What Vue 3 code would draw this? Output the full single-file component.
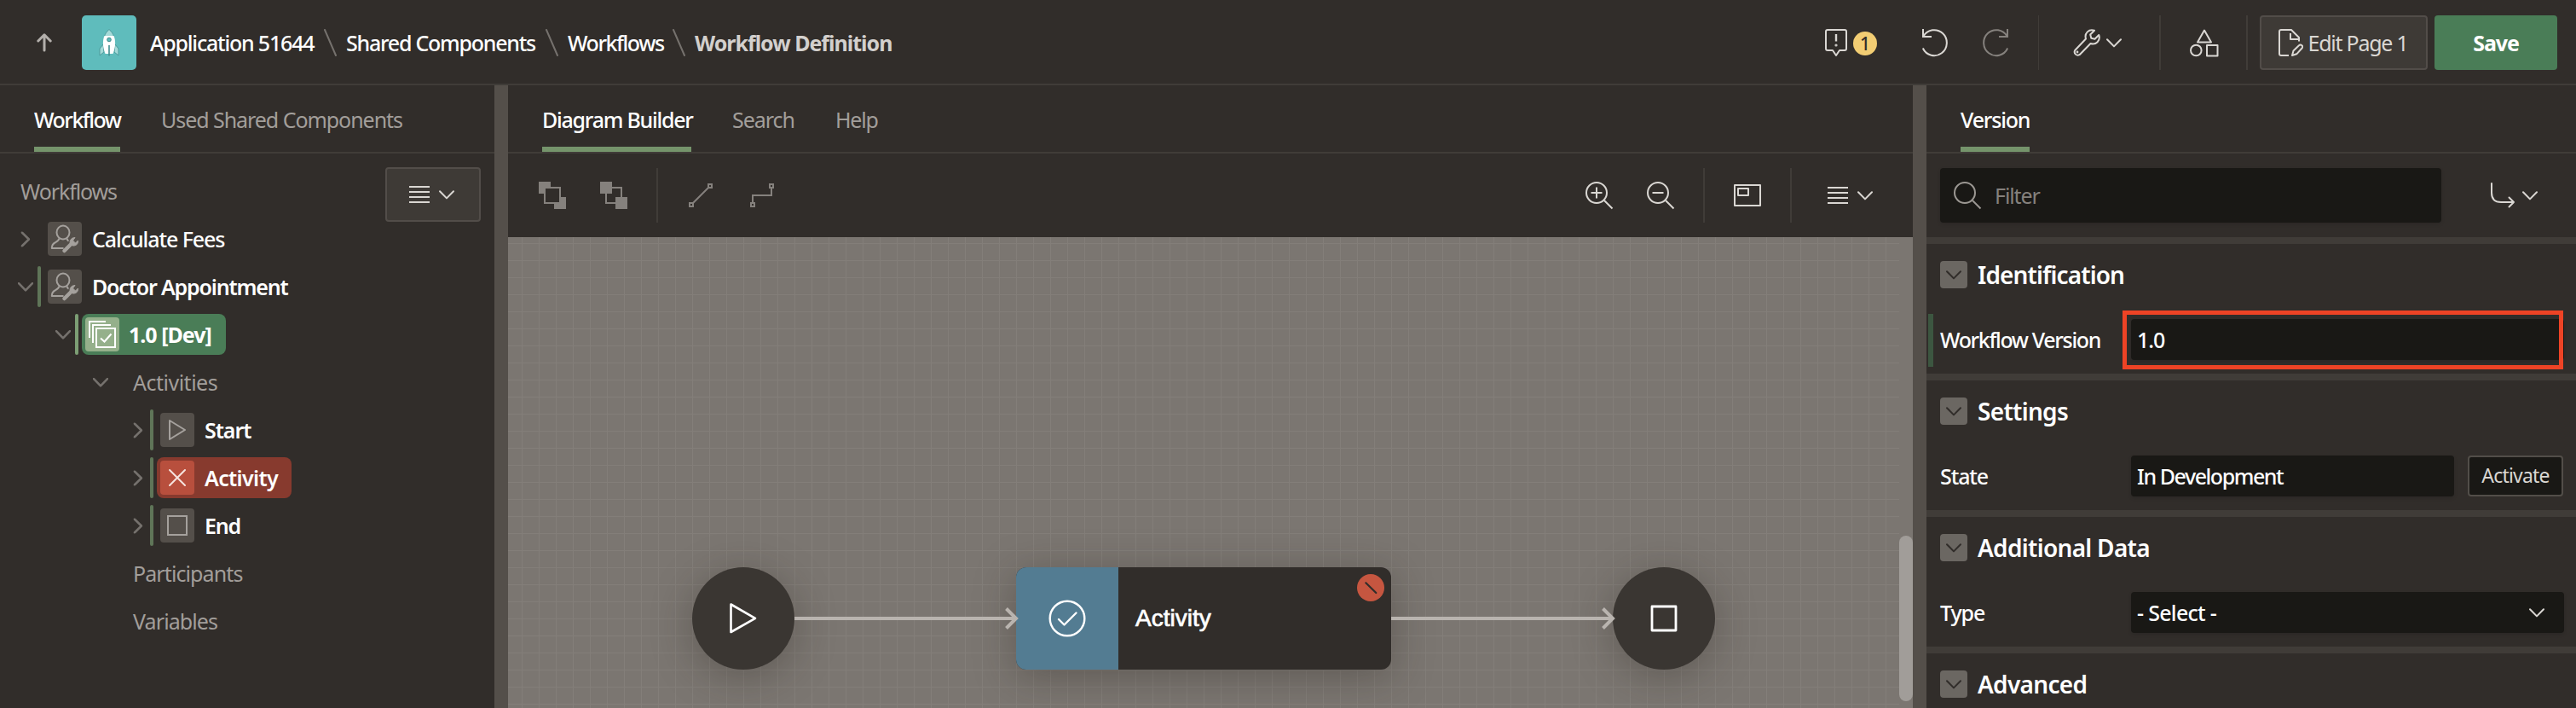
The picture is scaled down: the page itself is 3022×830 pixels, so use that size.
<script setup>
import { h } from 'vue'

const Chevron = (props) =>
  h('svg', { class: 'chev', width: 18, height: 11, viewBox: '0 0 18 11', fill: 'none', stroke: 'currentColor', 'stroke-width': props.w || 2, 'stroke-linecap': 'round', 'stroke-linejoin': 'round' }, [
    h('path', { d: 'M1 1.2L9 9.4L17 1.2' })
  ])
Chevron.props = ['w']

const MenuLines = () =>
  h('svg', { width: 24, height: 20, viewBox: '0 0 24 20', fill: 'none', stroke: 'currentColor', 'stroke-width': 2 }, [
    h('path', { d: 'M0 1H24M0 7H24M0 13H24M0 19H24' })
  ])

const crumbs = [
  { text: 'Application 51644', ls: -1.2, w: 194 },
  { text: 'Shared Components', ls: -1.25, w: 224 },
  { text: 'Workflows', ls: -1.45, w: 113 }
]

const tree = [
  { text: 'Calculate Fees', level: 0, toggle: 'closed', icon: 'flow', ls: -1.07, cls: 'medium' },
  { text: 'Doctor Appointment', level: 0, toggle: 'open', icon: 'flow', bar: true, ls: -1.18, cls: 'semi' },
  { text: '1.0 [Dev]', level: 1, toggle: 'open', icon: 'version', bar: true, ls: -1, cls: 'selected' },
  { text: 'Activities', level: 2, toggle: 'open', ls: -0.5, cls: 'plain' },
  { text: 'Start', level: 3, toggle: 'closed', icon: 'play', bar: true, ls: -1.05, cls: 'semi' },
  { text: 'Activity', level: 3, toggle: 'closed', icon: 'cross', bar: true, ls: -0.65, cls: 'error' },
  { text: 'End', level: 3, toggle: 'closed', icon: 'stop', bar: true, ls: -1.2, cls: 'semi' },
  { text: 'Participants', level: 2, ls: -0.9, cls: 'plain' },
  { text: 'Variables', level: 2, ls: -0.9, cls: 'plain' }
]
</script>

<template>
  <div class="app">
    <header class="top">
      <svg class="up" width="18" height="22" viewBox="0 0 18 22"><path d="M9 20V2M1.8 9L9 1.8L16.2 9" fill="none" stroke="#b3afab" stroke-width="3" stroke-linecap="round" stroke-linejoin="round" /></svg>
      <div class="logo">
        <svg width="24" height="32" viewBox="0 0 24 32">
          <path d="M5 18L1 23V31L6 27ZM19 18L23 23V31L18 27Z" fill="#a4dad8" stroke="#4a9a9b" stroke-width="1" />
          <path d="M12 0.5C9 3 7.500 5.500 6.500 8.500H17.500C16.500 5.500 15 3 12 0.500Z" fill="#a4dad8" stroke="#4a9a9b" stroke-width="1" />
          <path d="M6.500 8H17.500C20 14 19.500 22 16.500 29H7.500C4.500 22 4 14 6.500 8Z" fill="#fff" />
          <circle cx="12" cy="12.500" r="2.300" fill="#5fbcbc" stroke="#3f8a8b" />
          <path d="M12 19V31.500" stroke="#3f8f90" stroke-width="1.600" />
        </svg>
      </div>
      <nav class="crumbs">
        <template v-for="c in crumbs" :key="c.text">
          <span class="crumb" :style="{ letterSpacing: c.ls + 'px', width: c.w + 'px' }">{{ c.text }}</span>
          <svg class="slash" width="15" height="32" viewBox="0 0 15 32"><path d="M1 1L14 31" stroke="#75716d" stroke-width="2" stroke-linecap="round" /></svg>
        </template>
        <span class="crumb current">Workflow Definition</span>
      </nav>
      <div class="actions">
        <svg class="comment" width="26" height="32" viewBox="0 0 26 32" fill="none" stroke="#dad7d3" stroke-width="2" stroke-linejoin="round"><path d="M3 1H23A2 2 0 0 1 25 3V23A2 2 0 0 1 23 25H17L13 31L9 25H3A2 2 0 0 1 1 23V3A2 2 0 0 1 3 1Z" /><path d="M13 6V14.500" stroke-width="2.400" /><circle cx="13" cy="19" r="0.600" /></svg>
        <span class="badge">1</span>
        <svg class="undo" width="32" height="33" viewBox="0 0 32 33" fill="none" stroke="#dad7d3" stroke-width="2"><path d="M2 0V9H12M2.500 8.500A14.700 15 0 1 1 1.800 22.500" /></svg>
        <svg class="redo" width="32" height="33" viewBox="0 0 32 33" fill="none" stroke="#85817d" stroke-width="2"><path d="M30 0V9H20M29.500 8.500A14.700 15 0 1 0 30.200 22.500" /></svg>
        <i class="sep s1"></i>
        <svg class="wrench" width="32" height="32" viewBox="0 0 32 32" fill="none" stroke="#dad7d3" stroke-width="2" stroke-linejoin="round"><path d="M25 1.700C18.500 -0.500 13 5 15 11.500L2.200 25A3.900 3.900 0 0 0 7.600 30.200L20.500 17C27 19 32.500 13.500 30.300 7L25.500 11.800L21.300 10.800L20.200 6.500Z" /><circle cx="5" cy="27" r="0.800" stroke-width="1.200" /></svg>
        <Chevron class="light c-wrench" />
        <i class="sep s2"></i>
        <svg class="shapes" width="34" height="33" viewBox="0 0 34 33" fill="none" stroke="#dad7d3" stroke-width="2" stroke-linejoin="round"><path d="M17 1.500L25 15.500H9Z" /><circle cx="7.300" cy="25" r="6.300" /><path d="M20 19H32.500V31.500H20Z" /></svg>
        <i class="sep s3"></i>
        <div class="btn edit">
          <svg width="29" height="32" viewBox="0 0 29 32" fill="none" stroke="#dad7d3" stroke-width="2" stroke-linejoin="round"><path d="M12 31H3A2 2 0 0 1 1 29V3A2 2 0 0 1 3 1H15L24 10V14.500M14 5V12H23" /><path d="M16 31L17.500 25.500L24 19.300A2.300 2.300 0 0 1 27.500 22.500L21.300 29.300Z" /></svg>
          <span>Edit Page 1</span>
        </div>
        <div class="btn save"><span>Save</span></div>
      </div>
    </header>

    <main class="body">
      <section class="left">
        <div class="tabs">
          <span class="tab on t-wf">Workflow</span>
          <span class="tab t-shared">Used Shared Components</span>
        </div>
        <div class="tree-head">
          <span class="tree-title">Workflows</span>
          <div class="menu-btn"><MenuLines /><Chevron /></div>
        </div>
        <ul class="tree">
          <li v-for="n in tree" :key="n.text" :class="['node', n.cls, 'lv' + n.level]">
            <span class="toggle"><Chevron v-if="n.toggle" :class="n.toggle" :w="2.600" /></span>
            <i :class="['bar', { shown: n.bar }]"></i>
            <span class="pill">
              <span v-if="n.icon" class="ico">
                <svg v-if="n.icon === 'flow'" width="40" height="40" viewBox="0 0 40 40" fill="none" stroke="#a5a19d" stroke-width="2" stroke-linejoin="round"><ellipse cx="18" cy="12.500" rx="7.500" ry="8" /><path d="M13.500 19.500C13 22 11 23 8.500 24.500C5.500 26 4.800 28 4.800 31H18.500M22.500 19.500C22.800 21 23.300 22 24.500 22.600" /><path d="M19.500 34L28 25.500" stroke-width="4.500" stroke-linecap="round" /><path d="M32 18.500C28 18.500 25.500 21.500 26.200 25L29 28C33 28.500 36 26 35.500 22L32.500 25L29.500 22Z" fill="#a5a19d" stroke-width="1" /></svg>
                <svg v-else-if="n.icon === 'version'" width="40" height="40" viewBox="0 0 40 40" fill="none" stroke="#fff" stroke-width="2"><path d="M13 13H35V35H13ZM9 30V9H30M5 24V5H24" /><path d="M18 24.500L22.500 28.500L30.500 19.500" /></svg>
                <svg v-else-if="n.icon === 'play'" width="40" height="40" viewBox="0 0 40 40" fill="none" stroke="#a5a19d" stroke-width="2" stroke-linejoin="round"><path d="M11 9L29 20L11 31Z" /></svg>
                <svg v-else-if="n.icon === 'cross'" width="40" height="40" viewBox="0 0 40 40" fill="none" stroke="#f6e4df" stroke-width="2" stroke-linecap="round"><path d="M11 11L29 29M29 11L11 29" /></svg>
                <svg v-else width="40" height="40" viewBox="0 0 40 40" fill="none" stroke="#a5a19d" stroke-width="2"><path d="M9 9H31V31H9Z" /></svg>
              </span>
              <span class="label" :style="{ letterSpacing: n.ls + 'px' }">{{ n.text }}</span>
            </span>
          </li>
        </ul>
      </section>

      <div class="splitter"></div>

      <section class="center">
        <div class="tabs">
          <span class="tab on t-diag">Diagram Builder</span>
          <span class="tab t-search">Search</span>
          <span class="tab t-help">Help</span>
        </div>
        <div class="toolbar">
          <svg width="32" height="32" viewBox="0 0 32 32"><path d="M0 0H14V6H6V14H0ZM32 32H18V26H26V18H32Z" fill="#85817d" /><path d="M7 7H25V25H7Z" fill="none" stroke="#85817d" stroke-width="2" /></svg>
          <svg class="g40" width="32" height="32" viewBox="0 0 32 32"><path d="M7 7H25V25H7Z" fill="none" stroke="#85817d" stroke-width="2" /><path d="M0 0H14V14H0ZM18 18H32V32H18Z" fill="#85817d" /></svg>
          <i class="vr g34"></i>
          <svg class="g36" width="28" height="28" viewBox="0 0 28 28" fill="none" stroke="#85817d" stroke-width="2"><path d="M1 23H5V27H1ZM23 1H27V5H23ZM4.500 23.500L23.500 4.500" /></svg>
          <svg class="g44" width="28" height="28" viewBox="0 0 28 28" fill="none" stroke="#85817d" stroke-width="2"><path d="M1 23H5V27H1ZM23 1H27V5H23ZM3 23V14H25V5" /></svg>
          <div class="tool-right">
            <svg width="33" height="33" viewBox="0 0 33 33" fill="none" stroke="#dad7d3" stroke-width="2"><circle cx="13" cy="13" r="12" /><path d="M22 22L31.500 31.500M6.500 13H19.500M13 6.500V19.500" /></svg>
            <svg class="g39" width="33" height="33" viewBox="0 0 33 33" fill="none" stroke="#dad7d3" stroke-width="2"><circle cx="13" cy="13" r="12" /><path d="M22 22L31.500 31.500M6.500 13H19.500" /></svg>
            <i class="vr g33"></i>
            <svg class="g34" width="32" height="26" viewBox="0 0 32 26" fill="none" stroke="#dad7d3" stroke-width="2" stroke-linejoin="round"><path d="M1 1H31V25H1ZM5 5H17V13H5Z" /></svg>
            <i class="vr g34"></i>
            <MenuLines class="g42 light" />
            <Chevron class="g11 light" />
          </div>
        </div>
        <div class="canvas">
          <div class="grid"></div>
          <div class="nd circle start">
            <svg width="34" height="38" viewBox="0 0 34 38"><path d="M2.500 2.500L31 18.800L2.500 35Z" fill="none" stroke="#fff" stroke-width="2.600" stroke-linejoin="round" /></svg>
          </div>
          <div class="nd act">
            <div class="act-ico"><svg width="44" height="44" viewBox="0 0 44 44" fill="none" stroke="#fff" stroke-width="2.400" stroke-linecap="round" stroke-linejoin="round"><circle cx="22" cy="22" r="20.300" /><path d="M12 23L18.500 29.500L32.500 15.500" /></svg></div>
            <div class="act-name">Activity</div>
            <svg class="act-err" width="32" height="32" viewBox="0 0 32 32"><circle cx="16" cy="16" r="16" fill="#c65640" /><path d="M10.300 10.300L22.300 22" stroke="#312d2a" stroke-width="2.200" stroke-linecap="round" /></svg>
          </div>
          <div class="nd circle end">
            <svg width="32" height="32" viewBox="0 0 32 32"><path d="M2 2H30V30H2Z" fill="none" stroke="#fff" stroke-width="2.800" stroke-linejoin="round" /></svg>
          </div>
          <svg class="link l1" width="264" height="30" viewBox="0 0 264 30" fill="none" stroke="#b9b4af" stroke-width="4"><path d="M0 15H260M248.500 3.500L260 15L248.500 26.500" /></svg>
          <svg class="link l2" width="264" height="30" viewBox="0 0 264 30" fill="none" stroke="#b9b4af" stroke-width="4"><path d="M0 15H260M248.500 3.500L260 15L248.500 26.500" /></svg>
          <div class="thumb"></div>
        </div>
      </section>

      <div class="splitter"></div>

      <section class="right">
        <div class="tabs"><span class="tab on t-ver">Version</span></div>
        <div class="filter-row">
          <div class="filter">
            <svg width="33" height="33" viewBox="0 0 33 33" fill="none" stroke="#9b9792" stroke-width="2"><circle cx="13" cy="13" r="12" /><path d="M22 22L31.500 31.500" /></svg>
            <span>Filter</span>
          </div>
          <svg class="goto" width="30" height="30" viewBox="0 0 30 30" fill="none" stroke="#dad7d3" stroke-width="2" stroke-linecap="round" stroke-linejoin="round"><path d="M2 1V12Q2 23 13 23H28M22.500 17.500L28 23L22.500 28.500" /></svg>
          <Chevron class="light" />
        </div>

        <div class="group">
          <div class="g-head"><span class="box"><Chevron /></span><h3 class="h-id">Identification</h3></div>
          <div class="field changed">
            <label class="l-wv">Workflow Version</label>
            <div class="input full">1.0</div>
            <div class="highlight"></div>
          </div>
        </div>
        <div class="group">
          <div class="g-head"><span class="box"><Chevron /></span><h3>Settings</h3></div>
          <div class="field">
            <label>State</label>
            <div class="input state">In Development</div>
            <div class="activate">Activate</div>
          </div>
        </div>
        <div class="group">
          <div class="g-head"><span class="box"><Chevron /></span><h3>Additional Data</h3></div>
          <div class="field">
            <label>Type</label>
            <div class="input full select">- Select -<Chevron class="light" /></div>
          </div>
        </div>
        <div class="group">
          <div class="g-head"><span class="box"><Chevron /></span><h3>Advanced</h3></div>
        </div>
      </section>
    </main>
  </div>
</template>

<style>
body { background: #312d2a; overflow: hidden; }
</style>

<style scoped>
.app { width: 3022px; height: 830px; overflow: hidden; background: #312d2a; color: #fff; font: 500 25px/34px "Noto Sans", "Open Sans", sans-serif; letter-spacing: -1.1px; display: flex; flex-direction: column; white-space: nowrap; }
.app * { box-sizing: border-box; }
svg { display: block; flex: none; }
.light { color: #dad7d3; }

.top { height: 100px; border-bottom: 2px solid #403c38; display: flex; align-items: center; padding: 0 22px 0 43px; flex: none; }
.up { margin-top: 2px; }
.logo { width: 64px; height: 64px; margin: 2px 0 0 35px; border-radius: 5px; background: #5fbcbc; display: flex; align-items: center; justify-content: center; }
.crumbs { display: flex; align-items: center; margin-left: 16px; padding-top: 2px; }
.slash { margin: 0 11px 0 10px; }
.current { font-weight: 700; letter-spacing: -1px; color: #d3d0cd; }
.actions { display: flex; align-items: center; margin-left: auto; padding-top: 2px; }
.badge { width: 28px; height: 28px; margin-left: 7px; border-radius: 50%; background: #f2cd73; color: #312d2a; font-size: 21px; line-height: 28px; text-align: center; margin-top: 2px; letter-spacing: 0; }
.undo { margin-left: 52px; }
.redo { margin-left: 39px; }
.sep { width: 2px; height: 64px; background: #403c38; }
.s1 { margin-left: 34px; width: 1px; }
.wrench { margin-left: 40px; }
.c-wrench { margin-left: 7px; }
.s2 { margin-left: 44px; }
.shapes { margin-left: 34px; }
.s3 { margin-left: 32px; }
.btn { height: 64px; border-radius: 4px; display: flex; align-items: center; justify-content: center; }
.edit { width: 197px; margin-left: 14px; background: #3e3a36; border: 2px solid #524d49; color: #dad7d3; font-weight: 400; gap: 6px; padding-right: 2px; letter-spacing: -1.250px; }
.save { width: 144px; margin-left: 8px; background: #4a7d57; font-weight: 700; }

.body { flex: 1; min-height: 0; display: grid; grid-template-columns: 580px 16px 1648px 16px 762px; }
.splitter { background: #544f4a; }
.left, .center, .right { min-width: 0; overflow: hidden; display: flex; flex-direction: column; }
.tabs { height: 80px; flex: none; border-bottom: 2px solid #403c38; padding-left: 40px; display: flex; }
.tab { height: 78px; line-height: 80px; color: #a29e9a; font-weight: 400; margin-right: 48px; letter-spacing: -1.050px; }
.tab.on { color: #fff; font-weight: 500; border-bottom: 6px solid #75946b; }
.tab.t-wf { width: 101px; letter-spacing: -1.500px; }
.tab.t-diag { width: 175px; letter-spacing: -1.250px; }
.tab.t-search { width: 73px; }
.tab.t-help { letter-spacing: -1.200px; }
.tab.t-ver { width: 81px; letter-spacing: -1.200px; }

.tree-head { height: 72px; padding: 16px 16px 0 24px; display: flex; justify-content: space-between; }
.tree-title { color: #a29e9a; font-weight: 400; line-height: 56px; }
.menu-btn { width: 112px; height: 64px; border: 2px solid #524d49; border-radius: 4px; background: #3e3a36; color: #dad7d3; display: flex; align-items: center; justify-content: center; gap: 11px; padding-right: 3px; flex: none; }
.tree { list-style: none; margin: 0; padding: 0; }
.node { height: 56px; display: flex; align-items: center; }
.lv1 { padding-left: 44px; }
.lv2 { padding-left: 88px; }
.lv3 { padding-left: 132px; }
.toggle { width: 44px; padding-left: 21px; color: #75716d; display: flex; }
.toggle .closed { transform: rotate(-90deg); }
.bar { width: 4px; height: 48px; border-radius: 2px; }
.bar.shown { background: #5f7558; }
.selected .bar.shown { background: #7c9e74; }
.pill { height: 48px; margin-left: 4px; padding: 4px 16px 4px 4px; border-radius: 8px; display: flex; align-items: center; }
.ico { width: 40px; height: 40px; border-radius: 4px; background: #544f4a; margin-right: 12px; }
.semi { font-weight: 600; }
.selected { font-weight: 700; }
.selected .pill { background: #4a7d57; width: 169px; }
.selected .ico { background: #95b08b; margin-right: 11px; }
.error { font-weight: 600; }
.error .pill { background: #873a2e; width: 158px; }
.error .ico { background: #b84f3d; }
.plain { font-weight: 400; color: #a29e9a; }
.plain .pill { padding-left: 16px; }

.toolbar { height: 98px; flex: none; padding: 0 47px 0 36px; display: flex; align-items: center; }
.tool-right { margin-left: auto; display: flex; align-items: center; }
.vr { width: 2px; height: 64px; background: #403c38; }
.g11 { margin-left: 11px; }
.g33 { margin-left: 33px; }
.g34 { margin-left: 34px; }
.g36 { margin-left: 36px; }
.g39 { margin-left: 39px; }
.g40 { margin-left: 40px; }
.g42 { margin-left: 42px; }
.g44 { margin-left: 44px; }

.canvas { flex: 1; position: relative; overflow: hidden; background: #7b7671; }
.grid { position: absolute; inset: 0 16px 0 0; background-image: linear-gradient(#837e79 1px, transparent 1px), linear-gradient(90deg, #837e79 1px, transparent 1px); background-size: 20px 20px; background-position: 16px 7px; }
.nd { position: absolute; top: 387px; height: 120px; display: flex; align-items: center; justify-content: center; box-shadow: 0 8px 48px rgba(40, 34, 30, 0.34); }
.circle { width: 120px; border-radius: 50%; background: #3a3632; }
.start { left: 216px; }
.end { left: 1296px; }
.act { left: 596px; width: 440px; border-radius: 12px; background: #312d2a; justify-content: flex-start; }
.act-ico { width: 120px; height: 120px; border-radius: 12px 0 0 12px; background: #537c92; display: flex; align-items: center; justify-content: center; }
.act-name { margin-left: 20px; font: 400 28px/40px "Liberation Sans", Arial, sans-serif; letter-spacing: 0; -webkit-text-stroke: 0.700px #fff; }
.act-err { position: absolute; top: 8px; right: 8px; }
.link { position: absolute; top: 432px; }
.l1 { left: 336px; }
.l2 { left: 1036px; }
.thumb { position: absolute; right: 0; top: 350px; width: 16px; height: 194px; border-radius: 8px; background: #a19d99; }

.filter-row { height: 98px; flex: none; padding-left: 16px; display: flex; align-items: center; }
.filter { width: 588px; height: 64px; border-radius: 4px; background: #191815; display: flex; align-items: center; padding-left: 16px; color: #85817d; font-weight: 400; box-shadow: 0 2px 4px rgba(0, 0, 0, 0.120); }
.filter span { margin-left: 15px; }
.goto { margin: 0 8px 0 57px; }
.group { height: 160px; flex: none; border-top: 8px solid #403c38; }
.g-head { height: 72px; display: flex; align-items: center; padding-left: 16px; }
.box { width: 32px; height: 32px; border-radius: 4px; background: #6b6762; color: #312d2a; display: flex; align-items: center; justify-content: center; }
h3 { margin: 0 0 0 12px; font-size: 28px; font-weight: 600; letter-spacing: -0.700px; line-height: 40px; }
.h-id { letter-spacing: -0.900px; }
.field { position: relative; height: 80px; padding: 0 14px 0 16px; display: flex; align-items: center; }
.field label { width: 224px; letter-spacing: -1.100px; }
.field .l-wv { letter-spacing: -1.350px; }
.changed::before { content: ""; position: absolute; left: 2px; top: 10px; width: 6px; height: 62px; background: #3c5640; }
.input { height: 48px; line-height: 48px; border-radius: 4px; background: #191815; padding-left: 7px; box-shadow: 0 2px 4px rgba(0, 0, 0, 0.120); }
.full { width: 508px; }
.state { width: 379px; letter-spacing: -1.450px; }
.select { display: flex; align-items: center; justify-content: space-between; padding-right: 23px; letter-spacing: -0.700px; }
.activate { margin-left: 16px; width: 112px; height: 48px; border: 2px solid #524e49; border-radius: 4px; background: #191815; color: #dad7d3; font-size: 23px; font-weight: 400; line-height: 43px; text-align: center; letter-spacing: -0.800px; }
.highlight { position: absolute; left: 230px; top: 6px; width: 517px; height: 69px; border: 5px solid #ee4325; }
</style>
